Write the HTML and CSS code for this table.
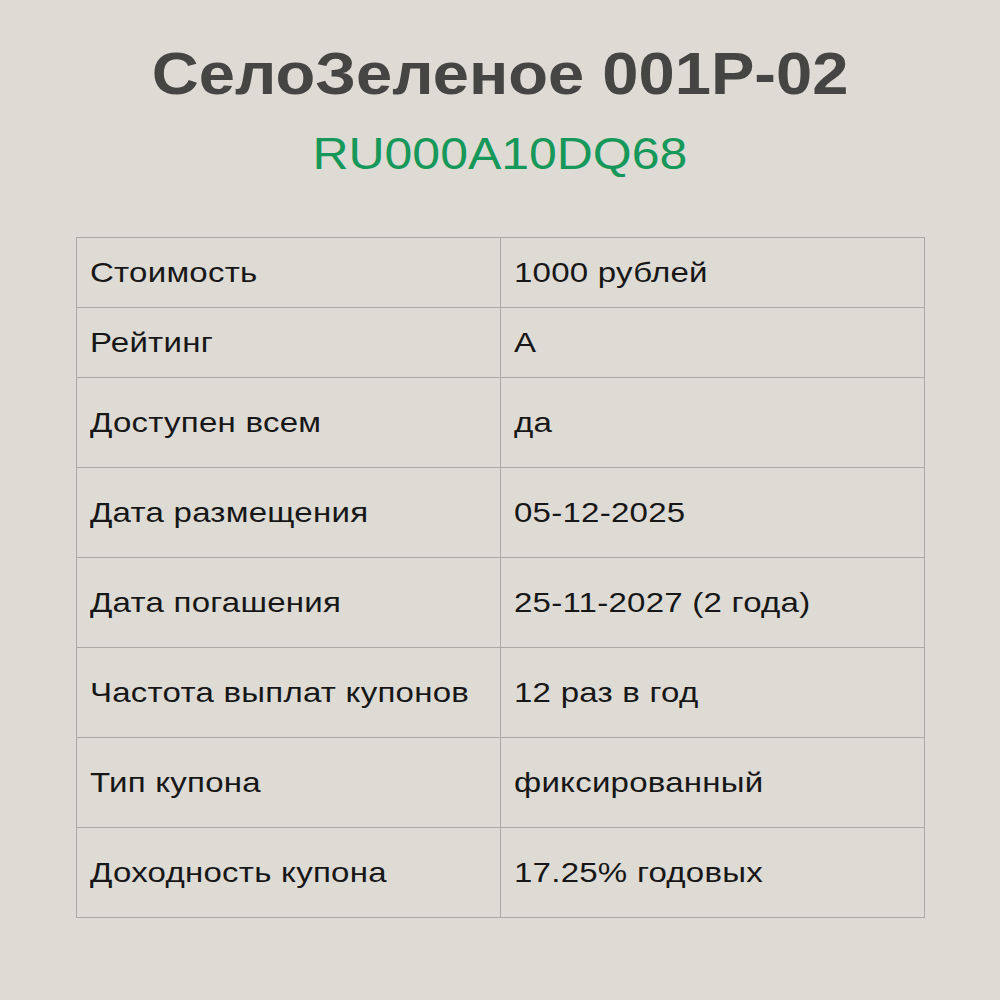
FILE: index.html
```html
<!DOCTYPE html>
<html lang="ru">
<head>
<meta charset="utf-8">
<link rel="stylesheet" href="styles.css">
</head>
<body>
<main class="page">
  <h1 class="title"><span class="wide">СелоЗеленое 001P-02</span></h1>
  <p class="isin"><span class="wide">RU000A10DQ68</span></p>
  <table class="info">
    <tr class="short"><td><span class="txt">Стоимость</span></td><td><span class="txt">1000 рублей</span></td></tr>
    <tr class="short"><td><span class="txt">Рейтинг</span></td><td><span class="txt">A</span></td></tr>
    <tr><td><span class="txt">Доступен всем</span></td><td><span class="txt">да</span></td></tr>
    <tr><td><span class="txt">Дата размещения</span></td><td><span class="txt">05-12-2025</span></td></tr>
    <tr><td><span class="txt">Дата погашения</span></td><td><span class="txt">25-11-2027 (2 года)</span></td></tr>
    <tr><td><span class="txt">Частота выплат купонов</span></td><td><span class="txt">12 раз в год</span></td></tr>
    <tr><td><span class="txt">Тип купона</span></td><td><span class="txt">фиксированный</span></td></tr>
    <tr><td><span class="txt">Доходность купона</span></td><td><span class="txt">17.25% годовых</span></td></tr>
  </table>
</main>
</body>
</html>
```
FILE: styles.css
```css
html, body {
  margin: 0;
  padding: 0;
  background: #dedbd5;
}
.page {
  width: 1000px;
  height: 1000px;
  box-sizing: border-box;
  padding-top: 44px;
  display: flex;
  flex-direction: column;
  align-items: center;
  font-family: "Liberation Sans", Arial, sans-serif;
}
.wide {
  display: inline-block;
  transform-origin: center center;
}
.title {
  margin: 0;
  font-size: 60px;
  line-height: 60px;
  font-weight: 700;
  color: #454543;
}
.title .wide {
  transform: scaleX(1.085);
}
.isin {
  margin: 27px 0 0;
  font-size: 45px;
  line-height: 45px;
  font-weight: 400;
  color: #16985a;
}
.isin .wide {
  transform: scaleX(1.11);
}
.info {
  margin-top: 61px;
  width: 849px;
  border-collapse: collapse;
  table-layout: fixed;
  border: 1px solid #aba9a4;
  color: #171717;
}
.info td {
  box-sizing: border-box;
  border: 1px solid #aba9a4;
  height: 90px;
  padding: 0 0 0 13px;
  font-size: 28px;
  vertical-align: middle;
  white-space: nowrap;
}
.info tr.short td {
  height: 70px;
}
.txt {
  display: inline-block;
  transform: scaleX(1.18);
  transform-origin: left center;
  letter-spacing: 0.2px;
}
```
